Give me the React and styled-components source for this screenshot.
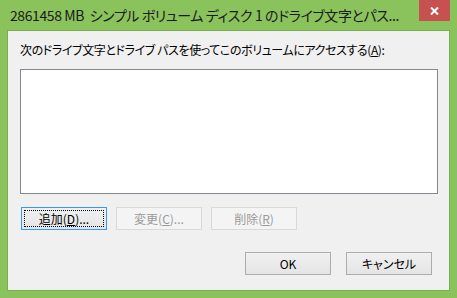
import React from "react";
import styled, { createGlobalStyle } from "styled-components";

const Global = createGlobalStyle`
  html, body { margin: 0; padding: 0; background: #8ac35c; }
  body { font-family: "Noto Sans CJK JP", "Noto Sans", sans-serif; }
  * { box-sizing: border-box; }
`;

const Window = styled.div`
  width: 457px;
  height: 298px;
  background: #8ac35c;
  padding: 0 7px 7px 7px;
  display: flex;
  flex-direction: column;
`;

const TitleBar = styled.div`
  height: 30px;
  display: flex;
  align-items: flex-start;
  justify-content: space-between;
`;

const Title = styled.div`
  flex: 1;
  min-width: 0;
  overflow: hidden;
  padding: 5px 0 0 3px;
  font-size: 14px;
  line-height: 20px;
  color: #1a1a1a;
  font-feature-settings: "palt";
  letter-spacing: -0.4px;
  white-space: nowrap;
`;

const CloseButton = styled.div`
  flex-shrink: 0;
  width: 31px;
  height: 21px;
  background: #c75050;
  display: flex;
  align-items: center;
  justify-content: center;
`;

const Content = styled.div`
  flex: 1;
  background: #f0f0f0;
  border: 1px solid #77b04c;
  padding: 12px 17px 15px 12px;
  display: flex;
  flex-direction: column;
`;

const Label = styled.div`
  font-size: 12px;
  line-height: 14px;
  color: #000;
  font-feature-settings: "palt";
  letter-spacing: -0.4px;
  white-space: nowrap;
`;

const ListBox = styled.div`
  margin-top: 12px;
  width: 418px;
  height: 125px;
  background: #fff;
  border: 1px solid #828790;
`;

const Row = styled.div`
  display: flex;
  gap: ${(p) => p.$gap}px;
  margin-top: ${(p) => p.$top}px;
  justify-content: ${(p) => (p.$end ? "flex-end" : "flex-start")};
  padding-left: ${(p) => p.$left || 0}px;
`;

const Button = styled.div`
  width: 86px;
  height: 23px;
  display: flex;
  align-items: center;
  justify-content: center;
  font-size: 12px;
  font-feature-settings: "palt";
  color: ${(p) => (p.$disabled ? "#9a9a9a" : "#000")};
  border: 1px solid
    ${(p) => (p.$focused ? "#3399ff" : p.$disabled ? "#d9d9d9" : "#acacac")};
  background: ${(p) =>
    p.$disabled
      ? "#f4f4f4"
      : "linear-gradient(#f0f0f0, #e5e5e5)"};
  position: relative;
  ${(p) =>
    p.$focused
      ? `&::after { content: ""; position: absolute; inset: 2px; border: 1px dotted #000; }`
      : ""}
`;

const U = styled.span`
  text-decoration: underline;
  text-underline-offset: 1px;
`;

export default function App() {
  return (
    <>
      <Global />
      <Window>
        <TitleBar>
          <Title>2861458 MB&nbsp;&nbsp;シンプル ボリューム ディスク 1 のドライブ文字とパス...</Title>
          <CloseButton>
            <svg width="9" height="8" viewBox="0 0 9 8">
              <path d="M1 0.5 L8 7.5 M8 0.5 L1 7.5" stroke="#fff" strokeWidth="2" />
            </svg>
          </CloseButton>
        </TitleBar>
        <Content>
          <Label>
            次のドライブ文字とドライブ パスを使ってこのボリュームにアクセスする(<U>A</U>):
          </Label>
          <ListBox />
          <Row $gap={9} $top={13} $left={1}>
            <Button $focused>
              追加(<U>D</U>)...
            </Button>
            <Button $disabled>
              変更(<U>C</U>)...
            </Button>
            <Button $disabled>
              削除(<U>R</U>)
            </Button>
          </Row>
          <Row $gap={15} $top={22} $end>
            <Button>OK</Button>
            <Button>キャンセル</Button>
          </Row>
        </Content>
      </Window>
    </>
  );
}
